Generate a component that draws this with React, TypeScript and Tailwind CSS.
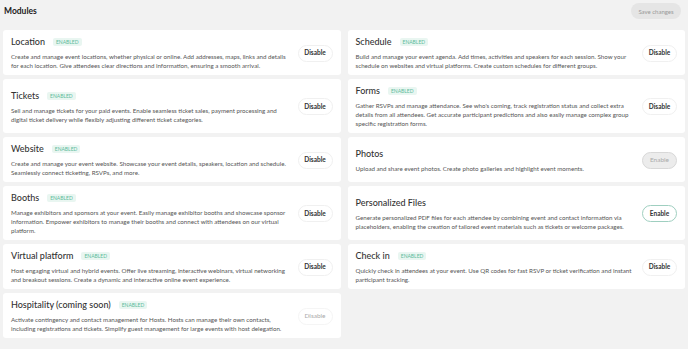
import React from 'react';

type Module = {
  title: string;
  description: string;
  enabled: boolean;
  action: 'disable' | 'disable-muted' | 'enable' | 'enable-muted';
};

const modules: Module[] = [
  {
    title: 'Location',
    description:
      'Create and manage event locations, whether physical or online. Add addresses, maps, links and details for each location. Give attendees clear directions and information, ensuring a smooth arrival.',
    enabled: true,
    action: 'disable',
  },
  {
    title: 'Schedule',
    description:
      'Build and manage your event agenda. Add times, activities and speakers for each session. Show your schedule on websites and virtual platforms. Create custom schedules for different groups.',
    enabled: true,
    action: 'disable',
  },
  {
    title: 'Tickets',
    description:
      'Sell and manage tickets for your paid events. Enable seamless ticket sales, payment processing and digital ticket delivery while flexibly adjusting different ticket categories.',
    enabled: true,
    action: 'disable',
  },
  {
    title: 'Forms',
    description:
      "Gather RSVPs and manage attendance. See who's coming, track registration status and collect extra details from all attendees. Get accurate participant predictions and also easily manage complex group specific registration forms.",
    enabled: true,
    action: 'disable',
  },
  {
    title: 'Website',
    description:
      'Create and manage your event website. Showcase your event details, speakers, location and schedule. Seamlessly connect ticketing, RSVPs, and more.',
    enabled: true,
    action: 'disable',
  },
  {
    title: 'Photos',
    description: 'Upload and share event photos. Create photo galleries and highlight event moments.',
    enabled: false,
    action: 'enable-muted',
  },
  {
    title: 'Booths',
    description:
      'Manage exhibitors and sponsors at your event. Easily manage exhibitor booths and showcase sponsor information. Empower exhibitors to manage their booths and connect with attendees on our virtual platform.',
    enabled: true,
    action: 'disable',
  },
  {
    title: 'Personalized Files',
    description:
      'Generate personalized PDF files for each attendee by combining event and contact information via placeholders, enabling the creation of tailored event materials such as tickets or welcome packages.',
    enabled: false,
    action: 'enable',
  },
  {
    title: 'Virtual platform',
    description:
      'Host engaging virtual and hybrid events. Offer live streaming, interactive webinars, virtual networking and breakout sessions. Create a dynamic and interactive online event experience.',
    enabled: true,
    action: 'disable',
  },
  {
    title: 'Check in',
    description:
      'Quickly check in attendees at your event. Use QR codes for fast RSVP or ticket verification and instant participant tracking.',
    enabled: true,
    action: 'disable',
  },
  {
    title: 'Hospitality (coming soon)',
    description:
      'Activate contingency and contact management for Hosts. Hosts can manage their own contacts, including registrations and tickets. Simplify guest management for large events with host delegation.',
    enabled: true,
    action: 'disable-muted',
  },
];

const ActionButton: React.FC<{ action: Module['action'] }> = ({ action }) => {
  if (action === 'disable') {
    return (
      <button className="h-[17px] w-[35px] shrink-0 rounded-full border border-[#f0f0f0] bg-white text-[6.5px] font-bold text-[#333]">
        Disable
      </button>
    );
  }
  if (action === 'disable-muted') {
    return (
      <button className="h-[17px] w-[35px] shrink-0 rounded-full border border-[#f5f5f5] bg-white text-[6.5px] text-[#aaa]">
        Disable
      </button>
    );
  }
  if (action === 'enable') {
    return (
      <button className="h-[17px] w-[35px] shrink-0 rounded-full border border-[#9fcfc0] bg-white text-[6.5px] font-bold text-[#333]">
        Enable
      </button>
    );
  }
  return (
    <button className="h-[17px] w-[35px] shrink-0 rounded-full border border-[#d8d8d8] bg-[#ececec] text-[6.5px] text-[#aaa]">
      Enable
    </button>
  );
};

const ModuleCard: React.FC<{ module: Module }> = ({ module }) => (
  <div className="flex items-center gap-[3px] rounded-[3px] bg-white px-[8px] pt-[6px] pb-[5px]">
    <div className="min-w-0 flex-1">
      <div className="flex h-[12px] items-center gap-[8px]">
        <span className="text-[9px] font-medium text-[#333]">{module.title}</span>
        {module.enabled && (
          <span className="rounded-[2px] bg-[#e9f6f1] px-[3px] text-[5px] leading-[8px] text-[#5bbb9b]">
            ENABLED
          </span>
        )}
      </div>
      <p className="mt-[4px] text-[6.2px] leading-[9px] text-[#555]">{module.description}</p>
    </div>
    <ActionButton action={module.action} />
  </div>
);

export default function App() {
  return (
    <div
      className="min-h-[349px] w-[688px] bg-[#f2f2f2] px-[3px]"
      style={{ fontFamily: 'Lato, "Noto Sans", sans-serif' }}
    >
      <div className="flex h-[30px] items-start justify-between">
        <h1 className="pl-[1px] pt-[5px] text-[8.5px] font-bold text-[#222]">Modules</h1>
        <button className="mt-[3px] mr-[4px] h-[16px] w-[50px] rounded-full bg-[#e5e5e5] text-[6px] text-[#999]">
          Save changes
        </button>
      </div>
      <div className="grid grid-cols-2 gap-x-[7px] gap-y-[4px]">
        {modules.map((m) => (
          <ModuleCard key={m.title} module={m} />
        ))}
      </div>
    </div>
  );
}
